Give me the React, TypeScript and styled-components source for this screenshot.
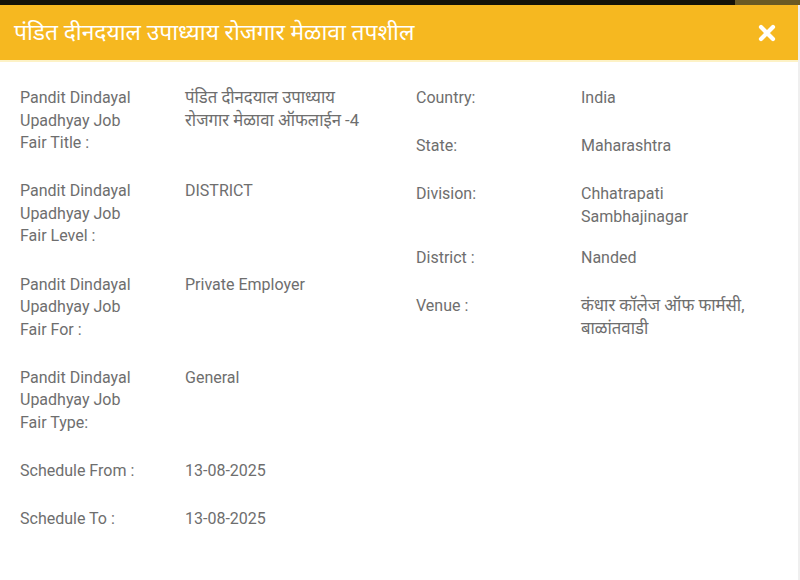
import React from 'react';
import styled, { createGlobalStyle } from 'styled-components';

const GlobalStyle = createGlobalStyle`
  html, body {
    margin: 0;
    padding: 0;
    background: #ffffff;
  }
  body {
    font-family: Roboto, 'Noto Sans', 'Noto Sans Devanagari', 'Lohit Devanagari', 'Mukta', sans-serif;
  }
`;

type Field = { label: string; value: string; deva?: boolean };

const leftFields: Field[] = [
  {
    label: 'Pandit Dindayal Upadhyay Job Fair Title :',
    value: 'पंडित दीनदयाल उपाध्याय रोजगार मेळावा ऑफलाईन -4',
    deva: true,
  },
  { label: 'Pandit Dindayal Upadhyay Job Fair Level :', value: 'DISTRICT' },
  { label: 'Pandit Dindayal Upadhyay Job Fair For :', value: 'Private Employer' },
  { label: 'Pandit Dindayal Upadhyay Job Fair Type:', value: 'General' },
  { label: 'Schedule From :', value: '13-08-2025' },
  { label: 'Schedule To :', value: '13-08-2025' },
];

const rightFields: Field[] = [
  { label: 'Country:', value: 'India' },
  { label: 'State:', value: 'Maharashtra' },
  { label: 'Division:', value: 'Chhatrapati Sambhajinagar' },
  { label: 'District :', value: 'Nanded' },
  { label: 'Venue :', value: 'कंधार कॉलेज ऑफ फार्मसी, बाळांतवाडी', deva: true },
];

const App = () => {
  return (
    <>
      <GlobalStyle />
      <Page>
        <Backdrop>
          <BackdropDark />
          <BackdropTint />
        </Backdrop>
        <Modal>
          <Header>
            <Title>पंडित दीनदयाल उपाध्याय रोजगार मेळावा तपशील</Title>
            <CloseButton type="button" aria-label="close">
              <svg width="18" height="18" viewBox="0 0 18 18">
                <path
                  d="M3 3 L15 15 M15 3 L3 15"
                  stroke="#ffffff"
                  strokeWidth="4.2"
                  strokeLinecap="round"
                />
              </svg>
            </CloseButton>
          </Header>
          <Body>
            <Column>
              {leftFields.map((f) => (
                <Row key={f.label} $gap={25.8}>
                  <Label>{f.label}</Label>
                  <Value $deva={f.deva} $padRight={40}>
                    {f.value}
                  </Value>
                </Row>
              ))}
            </Column>
            <Column>
              {rightFields.map((f) => (
                <Row key={f.label} $gap={19}>
                  <Label>{f.label}</Label>
                  <Value $deva={f.deva} $padRight={10}>
                    {f.value}
                  </Value>
                </Row>
              ))}
            </Column>
          </Body>
        </Modal>
      </Page>
    </>
  );
};

export default App;

const Page = styled.div`
  width: 800px;
  height: 580px;
  display: flex;
  flex-direction: column;
  overflow: hidden;
  background: #ffffff;
`;

const Backdrop = styled.div`
  display: flex;
  height: 5px;
  flex-shrink: 0;
`;

const BackdropDark = styled.div`
  flex: 1;
  background: #141208;
`;

const BackdropTint = styled.div`
  width: 65px;
  background: #6a5a24;
`;

const Modal = styled.div`
  flex: 1;
  display: flex;
  flex-direction: column;
  background: #ffffff;
  border-right: 2px solid #efefef;
`;

const Header = styled.div`
  height: 55px;
  display: flex;
  align-items: center;
  justify-content: space-between;
  padding: 0 22px 0 14px;
  background: #f6b820;
  border-bottom: 2px solid #fdf2c6;
  flex-shrink: 0;
`;

const Title = styled.h2`
  margin: 0 0 2px 0;
  font-size: 22.8px;
  font-weight: 400;
  color: #ffffff;
`;

const CloseButton = styled.button`
  border: none;
  background: transparent;
  padding: 0;
  display: flex;
  align-items: center;
  cursor: pointer;
`;

const Body = styled.div`
  display: grid;
  grid-template-columns: 396px 1fr;
  padding: 25px 20px 0 20px;
`;

const Column = styled.div`
  display: flex;
  flex-direction: column;
`;

const Row = styled.div<{ $gap: number }>`
  display: grid;
  grid-template-columns: 165px 1fr;
  min-height: 48px;
  padding-bottom: ${({ $gap }) => $gap}px;
  box-sizing: border-box;
  &:last-child {
    padding-bottom: 0;
  }
`;

const Label = styled.div`
  font-size: 16px;
  line-height: 22.5px;
  color: #6e6e6e;
  padding-right: 40px;
`;

const Value = styled.div<{ $deva?: boolean; $padRight: number }>`
  font-size: ${({ $deva }) => ($deva ? '16.7px' : '16px')};
  line-height: 22.5px;
  color: #6e6e6e;
  padding-right: ${({ $padRight }) => $padRight}px;
`;
